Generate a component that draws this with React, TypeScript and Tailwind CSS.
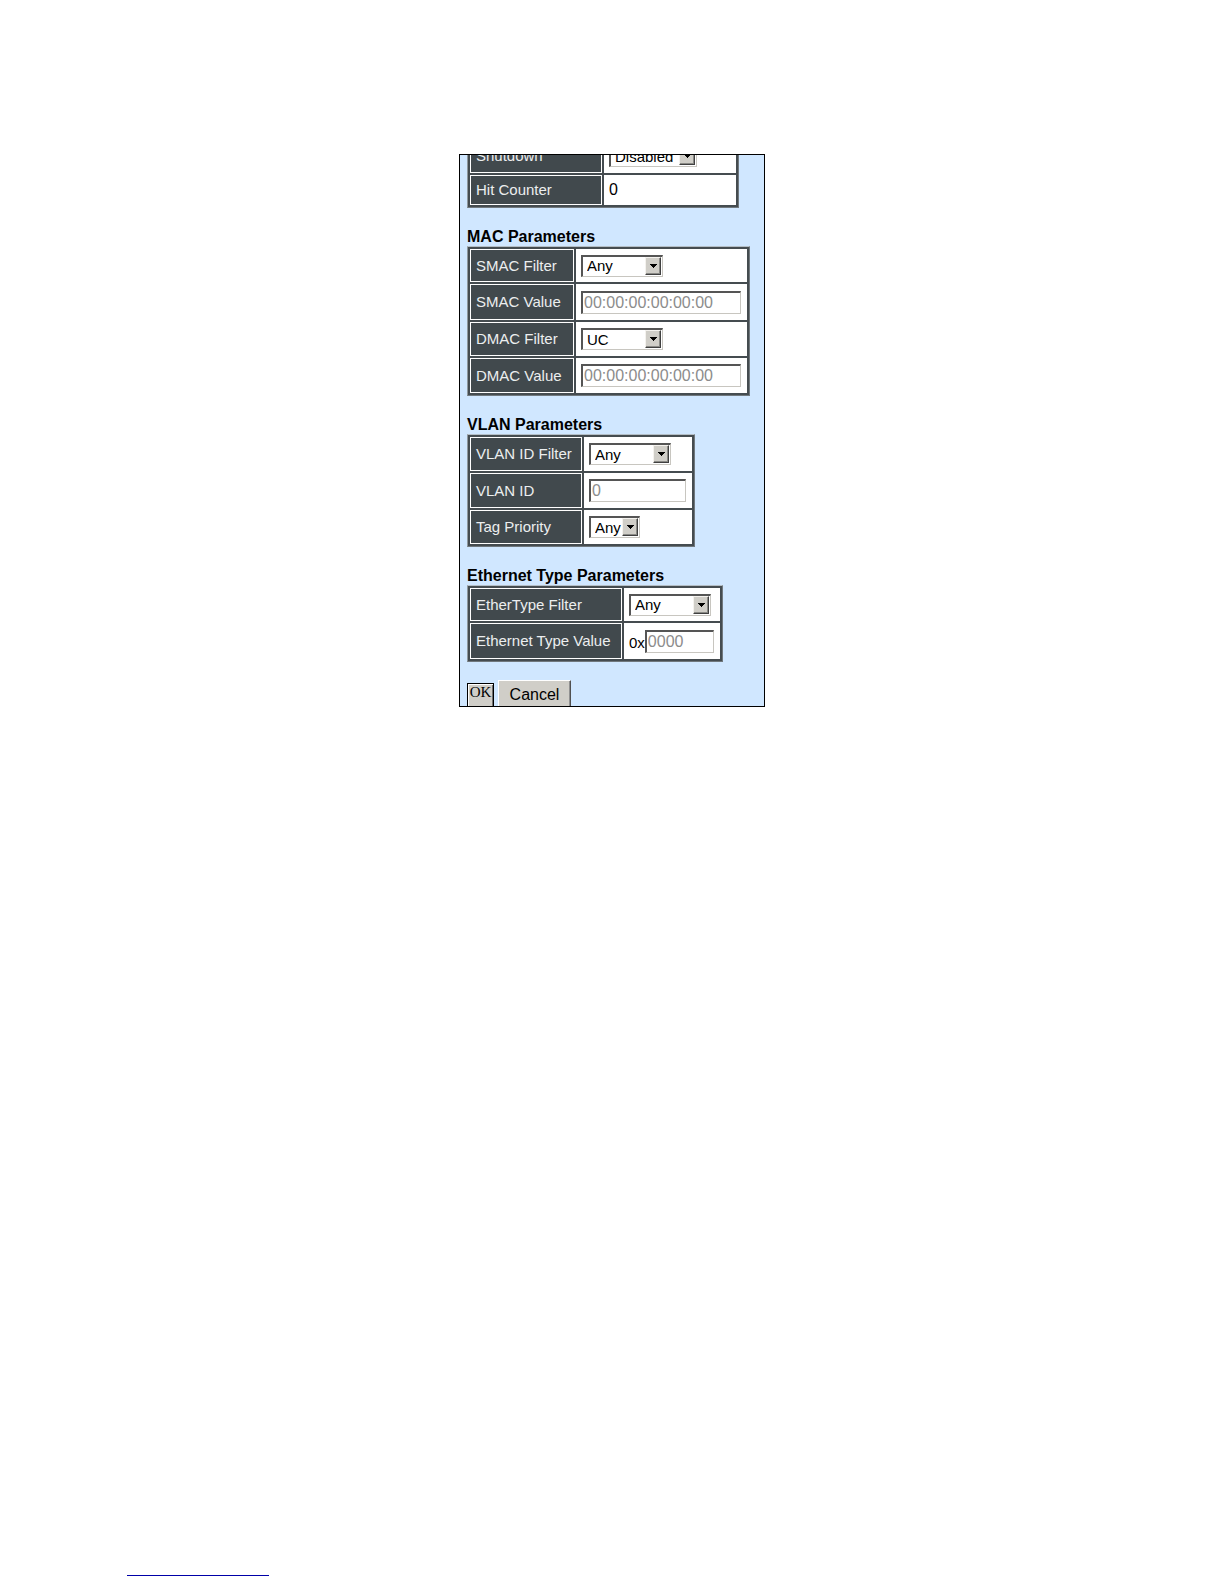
import type { ReactNode } from 'react';
import clsx from 'clsx';

const ArrowButton = () => (
  <span className="pointer-events-none absolute inset-y-0.5 right-0.5 flex w-4 items-center justify-center border border-t-[#f4f2ee] border-l-[#f4f2ee] border-r-[#404040] border-b-[#404040] bg-[#d0cec8] shadow-[inset_-1px_-1px_0_#8a8a86]">
    <svg width="7" height="4" viewBox="0 0 7 4" shapeRendering="crispEdges">
      <path d="M0 0h7v1H0zM1 1h5v1H1zM2 2h3v1H2zM3 3h1v1H3z" fill="#000" />
    </svg>
  </span>
);

interface SelectProps {
  id: string;
  value: string;
  options: string[];
  className: string;
}

const Select = ({ id, value, options, className }: SelectProps) => (
  <div className={clsx('relative h-[22px]', className)}>
    <select
      id={id}
      defaultValue={value}
      className="block h-full w-full appearance-none rounded-none border-t-2 border-l-2 border-r border-b border-t-[#555] border-l-[#555] border-r-[#c8c6c0] border-b-[#c8c6c0] bg-white pl-1 text-[15px] leading-[18px] text-black outline-none"
    >
      {options.map((option) => (
        <option key={option}>{option}</option>
      ))}
    </select>
    <ArrowButton />
  </div>
);

interface TextBoxProps {
  id: string;
  value: string;
  className: string;
}

const TextBox = ({ id, value, className }: TextBoxProps) => (
  <input
    id={id}
    type="text"
    defaultValue={value}
    disabled
    className={clsx(
      'block h-[23px] rounded-none border-t-2 border-l-2 border-r border-b border-t-[#555] border-l-[#555] border-r-[#c8c6c0] border-b-[#c8c6c0] bg-white pl-px text-base leading-5 text-[#8c8c8c]',
      className
    )}
  />
);

const Table = ({ children }: { children: ReactNode }) => (
  <table className="border-separate border-spacing-0.5 border border-t-[#b4bec6] border-l-[#8f989e] border-r-[#70787d] border-b-[#70787d] bg-[#454c50]">
    <tbody>{children}</tbody>
  </table>
);

interface RowProps {
  label: string;
  htmlFor?: string;
  labelClass: string;
  valueClass: string;
  height: string;
  children: ReactNode;
}

const Row = ({ label, htmlFor, labelClass, valueClass, height, children }: RowProps) => (
  <tr className={height}>
    <th
      scope="row"
      className={clsx(
        'border border-white bg-[#41494d] p-0 pl-[5px] text-left align-middle text-[15px] leading-5 font-normal whitespace-nowrap text-[#eceeef]',
        labelClass
      )}
    >
      {htmlFor ? <label htmlFor={htmlFor}>{label}</label> : label}
    </th>
    <td className={clsx('bg-white p-0 pl-[5px] align-middle', valueClass)}>{children}</td>
  </tr>
);

const Section = ({ title, children }: { title: string; children: ReactNode }) => (
  <section className="mt-5">
    <h2 className="text-base leading-[18px] font-bold">{title}</h2>
    <Table>{children}</Table>
  </section>
);

const FILTERS = ['Any', 'Specific'];
const MAC_FILTERS = ['Any', 'MC', 'BC', 'UC', 'Specific'];

export default function App() {
  const hit = { labelClass: 'w-[132px]', valueClass: 'w-[132px]' };
  const mac = { labelClass: 'w-[104px]', valueClass: 'w-[171px]' };
  const vlan = { labelClass: 'w-[112px]', valueClass: 'w-[108px]' };
  const ether = { labelClass: 'w-[152px]', valueClass: 'w-[96px]' };

  return (
    <main className="flex min-h-screen flex-col bg-white pt-[154px] pb-2 font-['Liberation_Sans',Arial,sans-serif] text-black">
      <form className="mx-auto h-[553px] w-[306px] overflow-hidden border border-black bg-[#d0e7ff] pl-[7px]">
        {/* the first table is scrolled partly out of view */}
        <div className="-mt-[19px]">
          <Table>
            <Row {...hit} label="Shutdown" htmlFor="shutdown" height="h-[34px]">
              <Select id="shutdown" value="Disabled" options={['Disabled', 'Enabled']} className="w-[88px]" />
            </Row>
            <Row {...hit} label="Hit Counter" height="h-[30px]">
              <span className="text-base leading-5">0</span>
            </Row>
          </Table>
        </div>

        <Section title="MAC Parameters">
          <Row {...mac} label="SMAC Filter" htmlFor="smac-filter" height="h-[33px]">
            <Select id="smac-filter" value="Any" options={MAC_FILTERS} className="w-[82px]" />
          </Row>
          <Row {...mac} label="SMAC Value" htmlFor="smac-value" height="h-[36px]">
            <TextBox id="smac-value" value="00:00:00:00:00:00" className="w-[160px]" />
          </Row>
          <Row {...mac} label="DMAC Filter" htmlFor="dmac-filter" height="h-[34px]">
            <Select id="dmac-filter" value="UC" options={MAC_FILTERS} className="w-[82px]" />
          </Row>
          <Row {...mac} label="DMAC Value" htmlFor="dmac-value" height="h-[35px]">
            <TextBox id="dmac-value" value="00:00:00:00:00:00" className="w-[160px]" />
          </Row>
        </Section>

        <Section title="VLAN Parameters">
          <Row {...vlan} label="VLAN ID Filter" htmlFor="vlan-filter" height="h-[34px]">
            <Select id="vlan-filter" value="Any" options={FILTERS} className="w-[82px]" />
          </Row>
          <Row {...vlan} label="VLAN ID" htmlFor="vlan-id" height="h-[35px]">
            <TextBox id="vlan-id" value="0" className="w-[97px]" />
          </Row>
          <Row {...vlan} label="Tag Priority" htmlFor="tag-priority" height="h-[34px]">
            <Select id="tag-priority" value="Any" options={['Any', '0', '1', '2', '3', '4', '5', '6', '7']} className="w-[51px]" />
          </Row>
        </Section>

        <Section title="Ethernet Type Parameters">
          <Row {...ether} label="EtherType Filter" htmlFor="ether-filter" height="h-[33px]">
            <Select id="ether-filter" value="Any" options={FILTERS} className="w-[82px]" />
          </Row>
          <Row {...ether} label="Ethernet Type Value" htmlFor="ether-value" height="h-[36px]">
            <div className="flex items-end">
              <span className="text-[15px] leading-5">0x</span>
              <TextBox id="ether-value" value="0000" className="w-[69px]" />
            </div>
          </Row>
        </Section>

        <div className="mt-[18px] flex items-end gap-1">
          <button
            type="button"
            className="h-[26px] w-[27px] border border-black bg-[#d0cec8] pb-2 font-['Liberation_Serif',serif] text-[15px] leading-4 shadow-[inset_1px_1px_0_#fff,inset_-1px_-1px_0_#707070]"
          >
            OK
          </button>
          <button
            type="button"
            className="h-[29px] w-[73px] border border-t-white border-l-white border-r-[#505050] border-b-[#505050] bg-[#d0cec8] text-base leading-5 shadow-[inset_-1px_-1px_0_#909090]"
          >
            Cancel
          </button>
        </div>
      </form>

      <hr className="mt-auto ml-[127px] h-px w-[142px] border-0 bg-[#0000a8]" />
    </main>
  );
}
